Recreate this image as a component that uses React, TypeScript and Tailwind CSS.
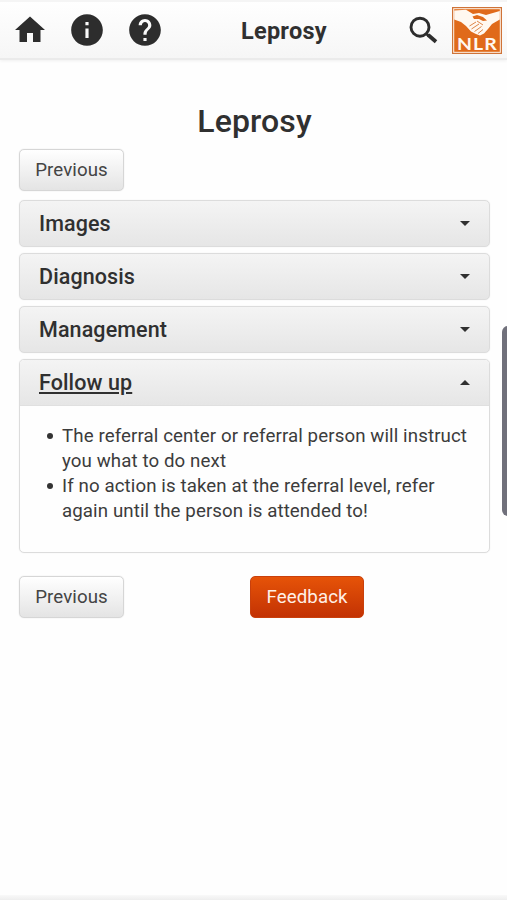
import React from "react";

const sections = ["Images", "Diagnosis", "Management"];

function MaterialIcon({ d, className }: { d: string; className: string }) {
  return (
    <svg viewBox="0 0 24 24" fill="currentColor" className={className} aria-hidden="true">
      <path d={d} />
    </svg>
  );
}

function SearchIcon() {
  return (
    <svg viewBox="0 0 38 38" className="size-[38px]" fill="none" stroke="currentColor" aria-hidden="true">
      <circle cx="16" cy="16.2" r="9" strokeWidth="2.9" />
      <path d="M22.7 22.9L24.7 24.9" strokeWidth="2.8" />
      <path d="M24.2 24L32 30.8" strokeWidth="3.8" />
    </svg>
  );
}

function Logo() {
  return (
    <svg viewBox="0 0 50 47" className="h-[47px] w-[50px] shrink-0" role="img" aria-label="NLR">
      <rect width="50" height="47" fill="#cf7338" />
      <rect x="1.2" y="1.2" width="47.6" height="44.6" fill="#fff6ea" />
      <rect x="2.2" y="2.2" width="45.6" height="42.6" fill="#e06a1a" />
      <path
        d="M2.2 3.5L14 2.8L21 7L27 6L34 8L47.8 4V12.5L40 17L36 22L32 26.5L28 28.5L24 27L19 24.5L14 19L9 15L2.2 12.5Z"
        fill="#fff8f0"
      />
      <path d="M20.5 9.5L25 8L31 10L35 13.5L31 14L27 12L22 12Z" fill="#e06a1a" />
      <path
        d="M17.5 19L24 15M19.5 22L27 17M22.5 24.5L29.5 19.5M26 26.5L31 22.5M25 14L31 18"
        stroke="#de8547"
        strokeWidth="1"
        fill="none"
      />
      <text
        x="5"
        y="42.5"
        textLength="41"
        lengthAdjust="spacingAndGlyphs"
        letterSpacing="1"
        fill="#fff8f0"
        fontFamily="Lato, sans-serif"
        fontWeight="700"
        fontSize="17"
      >
        NLR
      </text>
    </svg>
  );
}

function Header() {
  return (
    <header className="flex h-[60px] shrink-0 items-start border-b-2 border-[#ebebeb] bg-linear-to-b from-white to-[#f6f6f6] shadow-[0_1px_3px_rgba(0,0,0,0.06)]">
      <div className="flex w-full items-center border-t-2 border-[#f5f5f5] pt-[4.5px] pl-[11.5px] text-[#2d2d2d]">
        <MaterialIcon className="size-9" d="M10 20v-6h4v6h5v-8h3L12 3 2 12h3v8z" />
        <MaterialIcon
          className="ml-[20.5px] size-[38px]"
          d="M12 2C6.48 2 2 6.48 2 12s4.48 10 10 10 10-4.48 10-10S17.52 2 12 2zm1 15h-2v-6h2v6zm0-8h-2V7h2v2z"
        />
        <MaterialIcon
          className="ml-[20px] size-[38px]"
          d="M12 2C6.48 2 2 6.48 2 12s4.48 10 10 10 10-4.48 10-10S17.52 2 12 2zm1 17h-2v-2h2v2zm2.07-7.75l-.9.92C13.45 12.9 13 13.5 13 15h-2v-.5c0-1.1.45-2.1 1.17-2.83l1.24-1.26c.37-.36.59-.86.59-1.41 0-1.1-.9-2-2-2s-2 .9-2 2H8c0-2.21 1.79-4 4-4s4 1.79 4 4c0 .88-.36 1.68-.93 2.25z"
        />
        <div className="ml-[77px] w-[163px] pt-0.5 text-[23.5px] leading-8 font-bold tracking-[0.25px] text-[#303030]">
          Leprosy
        </div>
        <SearchIcon />
        <div className="ml-[10px]">
          <Logo />
        </div>
      </div>
    </header>
  );
}

function PreviousButton() {
  return (
    <button className="h-[42px] w-[105px] rounded-[5px] border-[1.5px] border-[#d6d6d6] bg-linear-to-b from-white to-[#e4e4e4] pt-px text-[18.7px] tracking-[0.1px] text-[#444] shadow-[0_0_1px_#ccc]">
      Previous
    </button>
  );
}

function Caret({ up = false }: { up?: boolean }) {
  return (
    <svg viewBox="0 0 10 5" className="h-[5px] w-[10px]" fill="#303030" aria-hidden="true">
      <path d={up ? "M0 5L5 0L10 5Z" : "M0 0L5 5L10 0Z"} />
    </svg>
  );
}

export default function App() {
  return (
    <div className="relative flex h-[900px] w-[507px] flex-col overflow-hidden bg-[#fefefe] font-[Roboto,sans-serif] text-[#303030]">
      <Header />
      <main className="flex grow flex-col pr-[17px] pl-[19px]">
        <h1 className="mt-[41px] text-center text-[32px] leading-10 font-medium tracking-[0.1px]">Leprosy</h1>
        <div className="mt-2 h-[42px]">
          <PreviousButton />
        </div>
        <div className="mt-[9px] flex flex-col gap-[6px]">
          {sections.map((name) => (
            <section
              key={name}
              className="flex h-[47px] items-center justify-between rounded-[5px] border border-[#dcdcdc] bg-linear-to-b from-[#f4f4f4] to-[#e6e6e6] px-[19px] shadow-[0_0_1px_#ddd]"
            >
              <h2 className="text-[21.5px] leading-6 font-medium tracking-[0.1px]">{name}</h2>
              <Caret />
            </section>
          ))}
          <section className="h-[194px] rounded-[5px] border border-[#dcdcdc] shadow-[0_0_1px_#ddd]">
            <div className="flex h-[46px] items-center justify-between rounded-t-[4px] border-b border-[#e0e0e0] bg-linear-to-b from-[#f4f4f4] to-[#e6e6e6] px-[19px]">
              <h2 className="pt-px text-[21.5px] leading-6 font-medium tracking-[0.1px] underline decoration-2 underline-offset-2">
                Follow up
              </h2>
              <Caret up />
            </div>
            <ul className="pt-[18px] pl-[42px] text-[18.7px] leading-[25px] tracking-[0.1px] text-[#3c3c3c]">
              <li className="relative">
                <span className="absolute top-[9px] -left-[15px] size-[6px] rounded-full bg-[#333]" />
                The referral center or referral person will instruct
                <br />
                you what to do next
              </li>
              <li className="relative">
                <span className="absolute top-[9px] -left-[15px] size-[6px] rounded-full bg-[#333]" />
                If no action is taken at the referral level, refer
                <br />
                again until the person is attended to!
              </li>
            </ul>
          </section>
        </div>
        <div className="mt-[23px] flex gap-[126px]">
          <PreviousButton />
          <button className="h-[42px] w-[114px] rounded-[5px] border border-[#c9400c] bg-linear-to-b from-[#e65308] to-[#c33204] pt-px text-[18.7px] tracking-[0.1px] text-[#fff0e8]">
            Feedback
          </button>
        </div>
      </main>
      <footer className="h-[5px] bg-linear-to-b from-[#f9f9f9] to-[#eeeeee]" />
      <div className="absolute top-[326px] left-[502px] h-[190px] w-[10px] rounded-l-[6px] bg-[#70707b]" />
    </div>
  );
}
